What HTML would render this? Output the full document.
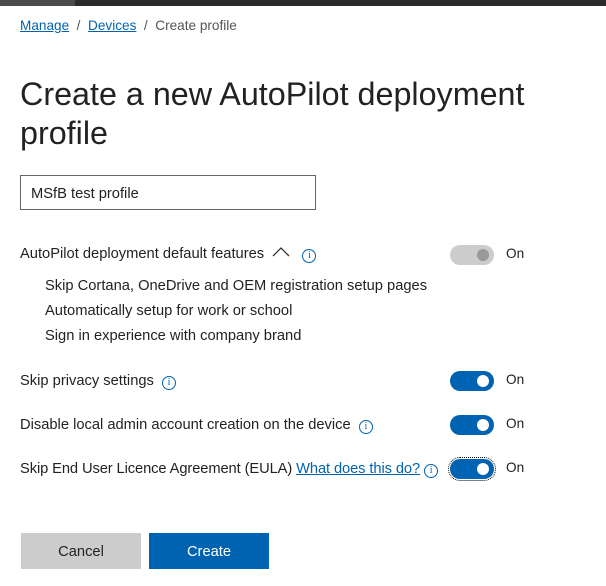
<!DOCTYPE html>
<html><head><style>
body{margin:0;width:606px;height:586px;background:#fff;font-family:"Segoe UI","Liberation Sans",sans-serif;color:#222;position:relative;overflow:hidden}
.top{position:absolute;left:0;top:0;width:606px;height:6px;background:#2b2b2b}
.top i{position:absolute;left:0;top:0;width:75px;height:6px;background:#4a4a4a}
.a{position:absolute;white-space:nowrap}
.bc{top:18px;left:20px;font-size:13.6px;color:#555}
.bc a{color:#0063b1;text-decoration:underline}
h1{position:absolute;left:20px;top:75px;margin:0;font-weight:300;font-size:32.3px;line-height:39px;color:#222}
.inp{position:absolute;left:20px;top:175px;height:33px;border:1px solid #666;font-size:14.7px;line-height:36px;box-sizing:content-box;padding-left:10px;width:284px}
.t{font-size:14.7px;margin-top:2px}
.info{display:inline-block;width:12px;height:12px;border:1px solid #0063b1;border-radius:50%;color:#0063b1;font-size:10px;line-height:12px;text-align:center;vertical-align:0px;font-family:"Liberation Serif",serif}
.tg{position:absolute;left:450px;width:44px;height:20px;border-radius:10px;background:#0063b1}
.tg:after{content:"";position:absolute;right:5px;top:4px;width:12px;height:12px;border-radius:50%;background:#fff}
.tg.g{background:#ccc}.tg.g:after{background:#999}
.on{position:absolute;left:506px;font-size:13.6px}
.btn{position:absolute;top:533px;width:120px;height:36px;font-size:14.7px;text-align:center;line-height:39px}
</style></head><body>
<div class="top"><i></i></div>
<div class="a bc"><a>Manage</a> &nbsp;/&nbsp; <a>Devices</a> &nbsp;/&nbsp; Create profile</div>
<h1>Create a new AutoPilot deployment<br>profile</h1>
<div class="inp">MSfB test profile</div>
<div class="a t" style="left:20px;top:244px">AutoPilot deployment default features <svg width="18" height="12" style="margin-left:4px;vertical-align:0"><path d="M1 10 L9 2 L17 10" fill="none" stroke="#333" stroke-width="1.3"/></svg> &nbsp;&nbsp;<span class="info">i</span></div>
<div class="tg g" style="top:245px"></div><div class="on" style="top:246px">On</div>
<div class="a t" style="left:45px;top:276px">Skip Cortana, OneDrive and OEM registration setup pages</div>
<div class="a t" style="left:45px;top:301px">Automatically setup for work or school</div>
<div class="a t" style="left:45px;top:326px">Sign in experience with company brand</div>
<div class="a t" style="left:20px;top:371px">Skip privacy settings &nbsp;<span class="info">i</span></div>
<div class="tg" style="top:371px"></div><div class="on" style="top:372px">On</div>
<div class="a t" style="left:20px;top:415px">Disable local admin account creation on the device &nbsp;<span class="info">i</span></div>
<div class="tg" style="top:415px"></div><div class="on" style="top:416px">On</div>
<div class="a t" style="left:20px;top:459px;letter-spacing:-0.1px">Skip End User Licence Agreement (EULA) <span style="color:#0063b1;text-decoration:underline">What does this do?</span> <span class="info">i</span></div>
<div class="tg" style="top:459px;outline:1px dotted #000;outline-offset:1px"></div><div class="on" style="top:460px">On</div>
<div class="btn" style="left:21px;background:#ccc">Cancel</div>
<div class="btn" style="left:149px;background:#0063b1;color:#fff">Create</div>
</body></html>
